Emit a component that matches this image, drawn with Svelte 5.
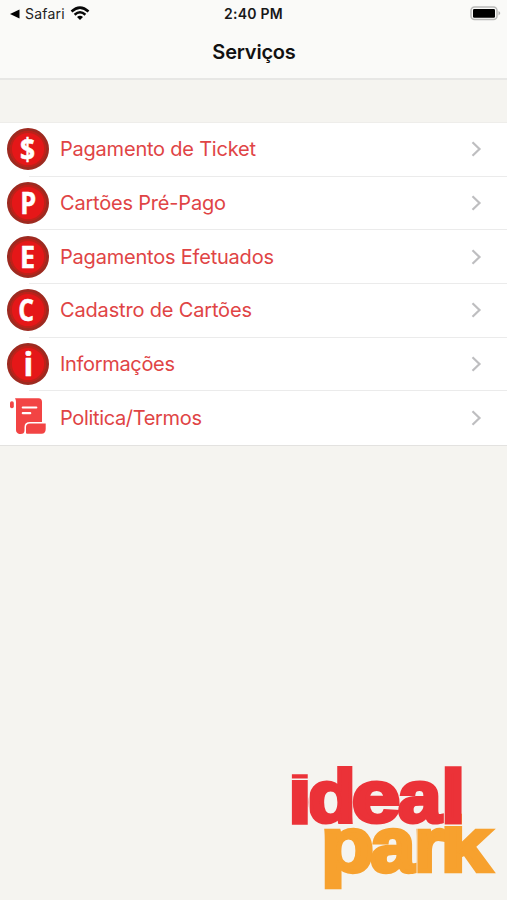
<script>
  const rows = [
    { icon: '$', label: 'Pagamento de Ticket', width: 196 },
    { icon: 'P', label: 'Cartões Pré-Pago', width: 166 },
    { icon: 'E', label: 'Pagamentos Efetuados', width: 214 },
    { icon: 'C', label: 'Cadastro de Cartões', width: 192 },
    { icon: 'i', label: 'Informações', width: 115 },
    { icon: 'scroll', label: 'Politica/Termos', width: 142 }
  ];

  // size, baseline, horizontal centre and horizontal scale of each badge letter
  const glyphs = {
    $: { size: 31, x: 20.5, y: 32, scale: 0.85 },
    P: { size: 31, x: 21.3, y: 32.3, scale: 0.82 },
    E: { size: 30, x: 20.5, y: 31.8, scale: 0.9 },
    C: { size: 31, x: 19.2, y: 32.2, scale: 0.8 },
    i: { size: 32, x: 21.3, y: 33.3, scale: 1 }
  };

  const orange = [
    { c: 'p', x: 321.2, scale: 1.13 },
    { c: 'a', x: 370.8, scale: 1.05 },
    { c: 'r', x: 413.5, scale: 1.03 },
    { c: 'k', x: 440.8, scale: 1.19 }
  ];
  const red = [
    { c: 'i', x: 291.5, y: 820.5, scale: 1, size: 60, stroke: 7.6 },
    { c: 'd', x: 307.6, y: 822.3, scale: 1.06, size: 74.5, stroke: 4 },
    { c: 'e', x: 351.8, y: 822.3, scale: 1.17, size: 74.5, stroke: 4 },
    { c: 'a', x: 398, y: 822.3, scale: 1.05, size: 74.5, stroke: 4 },
    { c: 'l', x: 443.3, y: 820.8, scale: 1, size: 70, stroke: 7.6 }
  ];
</script>

<div class="screen">
  <header>
    <div class="status">
      <div class="back">
        <svg width="10" height="10" viewBox="0 0 10 10"><path d="M0 5 9.500 .6V9.400Z" /></svg>
        <span>Safari</span>
        <svg class="wifi" width="20" height="15" viewBox="0 0 20 15">
          <path d="M1.500 5.500Q10-2.300 18.500 5.500M4.600 8.700Q10 3.900 15.400 8.700" fill="none" stroke="#080808" stroke-width="2.500" />
          <path d="M7 11Q10 8.300 13 11L10 14Z" />
        </svg>
      </div>
      <time>2:40 PM</time>
      <svg class="battery" width="31" height="15" viewBox="0 0 31 15">
        <rect x="1" y="1" width="26" height="12.500" rx="3.500" fill="#fafaf8" stroke="#b9b9b8" stroke-width="1.500" />
        <rect x="3" y="3" width="22" height="8.700" rx="1.200" fill="#000" />
        <path d="M28.500 5Q32 7.200 28.500 9.500Z" fill="#b0b0b0" />
      </svg>
    </div>
    <h1>Serviços</h1>
  </header>

  <main>
    {#each rows as row}
      {@const g = glyphs[row.icon]}
      <div class="row">
        <svg class="icon" width="42" height="42" viewBox="0 0 42 42">
          {#if !g}
            <g fill="#f24444">
              <rect x="3" y="4.300" width="3.800" height="7" rx="1.800" />
              <path d="M8 1.200H31.500Q35 1.200 35 5V25H23Q17.500 25 17.500 30V33.500Q17.500 37 13.500 37H12.500Q9 36 9 33V5Q9 3 8 1.200Z" />
              <path d="M20 36.800Q18.500 36.800 19 34.500V30Q19 26.500 23 26.500H38.700V32Q38.700 36.800 34.500 36.800Z" />
            </g>
            <path d="M15.800 10.500H29.300M15.800 16.200H23.200" stroke="#fff" stroke-width="2.200" stroke-linecap="round" />
          {:else}
            <circle cx="21" cy="21" r="19.400" fill="#e51718" stroke="#9d2a20" stroke-width="3.200" />
            <circle cx="21" cy="21" r="17" fill="none" stroke="#bd2119" stroke-width="1.800" />
            <text class="glyph" font-size={g.size} transform="translate({g.x} {g.y}) scale({g.scale} 1)">{row.icon}</text>
          {/if}
        </svg>
        <div class="content">
          <svg class="label" width="240" height="34">
            <text x="0" y="24.200" textLength={row.width}>{row.label}</text>
          </svg>
          <svg class="chevron" width="11" height="18" viewBox="0 0 11 18"><path d="m1.500 2.300 7 6.700-7 6.700" /></svg>
        </div>
      </div>
    {/each}
  </main>

  <footer>
    <svg class="logo" width="206" height="126" viewBox="290 764 206 126">
      <g class="orange">
        {#each orange as l}
          <text font-size="76" stroke-width="4.400" transform="translate({l.x} 871) scale({l.scale} 1)">{l.c}</text>
        {/each}
      </g>
      <path class="gap wide" d="M464 806V826" />
      <g class="red">
        {#each red as l}
          <text font-size={l.size} stroke-width={l.stroke} transform="translate({l.x} {l.y}) scale({l.scale} 1)">{l.c}</text>
        {/each}
      </g>
      <path class="gap" d="M291 779.300H309.500M444 825.200H466" />
      <path class="gap thin" d="M309.300 779V826M444.300 765V825M417 828V874" />
    </svg>
  </footer>
</div>

<style>
  :global(body) { margin: 0; background: #f5f4f0; }
  .screen {
    width: 507px; height: 900px; display: flex; flex-direction: column;
    overflow: hidden; background: #f5f4f0; font-family: Inter, "Liberation Sans", sans-serif;
  }
  header { box-sizing: border-box; height: 80px; background: #fafaf8; border-bottom: 2px solid #e7e7e5; }
  .status { height: 27px; display: grid; grid-template-columns: 1fr auto 1fr; align-items: center; padding: 0 6px 0 10px; }
  .back { display: flex; align-items: center; font-size: 14px; letter-spacing: .2px; color: #222; }
  .back span { margin: 0 0 0 5px; }
  .wifi { margin-left: 5px; }
  time { font-size: 14px; font-weight: 600; letter-spacing: .25px; color: #181818; margin: 0 4px 0 0; }
  .battery { justify-self: end; }
  h1 { margin: 12px 0 0 1px; text-align: center; font-size: 20px; line-height: 26px; font-weight: 600; letter-spacing: -.2px; color: #111; }
  main { height: 322px; margin-top: 42px; border-top: 1px solid #eeedea; border-bottom: 1px solid #e3e2e0; background: #fff; display: flex; flex-direction: column; }
  .row { flex: 1; display: flex; align-items: center; padding-left: 7px; }
  .icon { flex: none; margin: -1px 11px 0 0; position: relative; }
  svg { overflow: visible; }
  .content { flex: 1; align-self: stretch; display: flex; align-items: center; justify-content: space-between; border-bottom: 1px solid #ebebeb; margin-left: -31px; padding: 0 25px 0 31px; }
  .row:last-child .content { border-bottom: 0; }
  .label text { font-size: 20px; fill: #e04445; }
  .chevron path { fill: none; stroke: #bebec0; stroke-width: 2.2; }
  .glyph { font-family: "Open Sans", sans-serif; font-weight: 700; text-anchor: middle; fill: #fff; stroke: #fff; stroke-width: .5; stroke-linejoin: round; }
  footer { margin-top: auto; padding: 0 11px 10px; display: flex; justify-content: flex-end; }
  .logo text { font-family: "Liberation Sans", sans-serif; font-weight: 700; stroke-linejoin: miter; }
  .red { fill: #eb3238; stroke: #eb3238; }
  .orange { fill: #f7a12e; stroke: #f7a12e; }
  .gap { stroke: #f5f4f0; stroke-width: 1.6; fill: none; }
  .thin { stroke-width: .8; }
  .wide { stroke-width: 4; }
</style>
